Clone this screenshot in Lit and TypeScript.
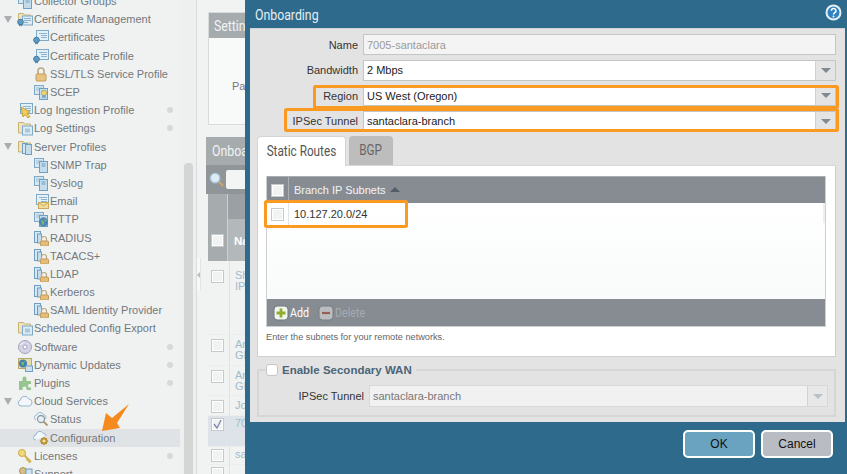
import { LitElement, html, svg, css, nothing } from 'lit';
import { customElement } from 'lit/decorators.js';

// sidebar icons, all drawn on a 16x16 box
const folder = svg`<path d="M1.5 2.5h5l1 1.5h6v9h-12z" fill="#efe4bb" stroke="#c8b377"/>`;
const sheet = svg`<rect x="5.5" y="5" width="10" height="9" fill="#dcebf4" stroke="#7ea9c7"/><path d="M7 7.500h7M7 9.500h7M7 11.500h4" stroke="#8db4cf"/>`;
const doc = svg`<rect x="3.500" y="1.500" width="12" height="10" fill="#e4f0f7" stroke="#7ea9c7"/><path d="M6 4.500h8M8 6.500h6M8 8.500h6" stroke="#8db4cf"/>`;
const badge = svg`<circle cx="3.500" cy="11" r="2.800" fill="#5f9cc4" stroke="#3f7ba3"/><path d="M2.500 13l-.5 2.500 1.500-1 1.500 1-.5-2.500" fill="#3f7ba3"/>`;
const servers = svg`<rect x="1.500" y="1.500" width="9" height="9" fill="#d6e7f2" stroke="#7ea9c7"/><path d="M3 4h6M3 6h3" stroke="#9cbfd6"/><rect x="6.500" y="4.500" width="8" height="11" fill="#c5dcec" stroke="#6f9fc1"/><path d="M8.500 7h4M8.500 9h4" stroke="#6f9fc1"/>`;
const padlock = svg`<path d="M8.500 11V9a2.500 2.500 0 0 1 5 0v2" fill="none" stroke="#b9a883" stroke-width="1.200"/><rect x="7.500" y="11" width="8" height="5" rx="1" fill="#e5bd79" stroke="#c49c59"/>`;

const icons: Record<string, unknown> = {
  folderDoc: svg`${folder}${sheet}`,
  folderCert: svg`${folder}${sheet}${badge}`,
  cert: svg`${doc}${badge}`,
  lock: svg`<path d="M5 8V5a3 3 0 0 1 6 0v3" fill="none" stroke="#b9a883" stroke-width="1.600"/><rect x="3" y="8" width="10" height="7" rx="1" fill="#e9c383" stroke="#c49c59"/>`,
  scep: svg`${servers}<circle cx="11" cy="9" r="2.500" fill="#f1d878" stroke="#caa94a"/><path d="M9.500 11l3 0 .5 3.500-2-1-2 1z" fill="#6fa4c8"/>`,
  ingest: svg`${doc}<path d="M4 5l9 5-3 1.500 3 3-2 1.500-3-3.500-2 2.500z" fill="#f3cd5c" stroke="#c79f35"/>`,
  folderPlain: svg`${folder}<rect x="5.500" y="6" width="10" height="9" fill="#dcebf4" stroke="#7ea9c7"/><path d="M8 8.500h5v4h-5z" fill="#a8c8dd"/>`,
  folderServer: svg`${folder}<rect x="5.500" y="4.500" width="5" height="10" fill="#d6e7f2" stroke="#6f9fc1"/><rect x="8.500" y="5.500" width="6" height="10" fill="#c5dcec" stroke="#6f9fc1"/>`,
  server: servers,
  mail: svg`${doc}<rect x="5.500" y="9.500" width="10" height="6" fill="#f3dd9b" stroke="#c9a95a"/><path d="M5.500 9.500l5 3.500 5-3.500" fill="none" stroke="#c9a95a"/>`,
  web: svg`${servers}<circle cx="10.500" cy="11" r="4.500" fill="#4a87b8"/><path d="M8 9l3 1v3l-2 1zM11 7.500l3 2-2 1z" fill="#7cb66a"/>`,
  serverLock: svg`<rect x="1.500" y="1.500" width="6" height="11" fill="#d6e7f2" stroke="#6f9fc1"/><rect x="4.500" y="4" width="4" height="9" fill="#c5dcec" stroke="#6f9fc1"/>${padlock}`,
  disc: svg`<circle cx="8" cy="8" r="6.500" fill="#d5d3e6" stroke="#a3a2bb"/><circle cx="8" cy="8" r="2" fill="#fff" stroke="#a3a2bb"/><path d="M3.500 6a5 5 0 0 1 3-2.500" stroke="#fff" fill="none"/>`,
  updates: svg`<rect x="1.500" y="1.500" width="13" height="10" fill="#e5dcae" stroke="#b9a868"/><circle cx="6" cy="6.500" r="4" fill="#3f7fb0"/><path d="M4 4.500l3 .5v3l-2 .5zM7 3.500l2 1-1 1z" fill="#79b56a"/><rect x="8.500" y="9" width="7" height="5.500" fill="#cfe1ee" stroke="#6f9fc1"/>`,
  plugin: svg`<path d="M2 6h3.500V3.500a2 2 0 0 1 4 0V6H14v3h-2a2 2 0 0 0 0 3.500h2V15H9.500v-1.500a2 2 0 0 0-4 0V15H2z" fill="#97c590"/>`,
  cloud: svg`<path d="M4 13a3 3 0 0 1-.6-5.900 4.200 4.200 0 0 1 8-1.400 3.700 3.700 0 0 1 .8 7.300z" fill="#f3f7fa" stroke="#94b6cd"/>`,
  status: svg`<path d="M3 9a2.500 2.500 0 0 1 .5-4.800 3.800 3.800 0 0 1 7-.7 3 3 0 0 1 2 4.500" fill="#f3f7fa" stroke="#94b6cd"/><circle cx="8" cy="8" r="3.500" fill="#e6f0f6" stroke="#8b9aa5" stroke-width="1.300"/><path d="M10.500 10.500l4 4" stroke="#aa9a78" stroke-width="2"/>`,
  config: svg`<path d="M3 10a2.500 2.500 0 0 1 0-5 3.800 3.800 0 0 1 7.200-1.500 3 3 0 0 1 3 2.500" fill="#f3f7fa" stroke="#94b6cd"/><circle cx="11" cy="11" r="3.200" fill="#e8bd5c" stroke="#b08c32"/><path d="M11 6.800v8.400M6.800 11h8.400M8 8l6 6M14 8l-6 6" stroke="#b08c32"/><circle cx="11" cy="11" r="1.300" fill="#f6e4ae"/>`,
  key: svg`<circle cx="5" cy="5" r="3.500" fill="#f1d878" stroke="#c9a94a"/><path d="M7.500 7.500l6.500 6.500M11 11l-1.500 1.500M13 13l-1.500 1.500" stroke="#d0b153" stroke-width="2"/>`,
  people: svg`<circle cx="6" cy="5" r="3.500" fill="#d7bd86" stroke="#ad9358"/><rect x="9" y="3" width="6" height="10" fill="#cfe1ee" stroke="#6f9fc1"/><path d="M1 15c0-7 10-7 10 0z" fill="#d7bd86"/>`,
};

interface TreeItem { label: string; icon: string; child?: boolean; open?: boolean; dot?: boolean; selected?: boolean }

const tree: TreeItem[] = [
  { label: 'Collector Groups', icon: 'server' },
  { label: 'Certificate Management', icon: 'folderCert', open: true },
  { label: 'Certificates', icon: 'cert', child: true },
  { label: 'Certificate Profile', icon: 'cert', child: true },
  { label: 'SSL/TLS Service Profile', icon: 'lock', child: true },
  { label: 'SCEP', icon: 'scep', child: true },
  { label: 'Log Ingestion Profile', icon: 'ingest', dot: true },
  { label: 'Log Settings', icon: 'folderPlain', dot: true },
  { label: 'Server Profiles', icon: 'folderServer', open: true },
  { label: 'SNMP Trap', icon: 'server', child: true },
  { label: 'Syslog', icon: 'server', child: true },
  { label: 'Email', icon: 'mail', child: true },
  { label: 'HTTP', icon: 'web', child: true },
  { label: 'RADIUS', icon: 'serverLock', child: true },
  { label: 'TACACS+', icon: 'serverLock', child: true },
  { label: 'LDAP', icon: 'serverLock', child: true },
  { label: 'Kerberos', icon: 'serverLock', child: true },
  { label: 'SAML Identity Provider', icon: 'serverLock', child: true },
  { label: 'Scheduled Config Export', icon: 'folderPlain' },
  { label: 'Software', icon: 'disc', dot: true },
  { label: 'Dynamic Updates', icon: 'updates', dot: true },
  { label: 'Plugins', icon: 'plugin', dot: true },
  { label: 'Cloud Services', icon: 'cloud', open: true },
  { label: 'Status', icon: 'status', child: true },
  { label: 'Configuration', icon: 'config', child: true, selected: true },
  { label: 'Licenses', icon: 'key', dot: true },
  { label: 'Support', icon: 'people' },
];

const backRows = [
  { text: ['Sh', 'IP'], cls: 'r74' },
  { text: ['Ar', 'GI'], cls: 'r31' },
  { text: ['Ar', 'GI'], cls: 'r30' },
  { text: ['Jo'], cls: 'r20' },
  { text: ['70'], cls: 'r31 sel', checked: true },
  { text: ['sa'], cls: 'r18' },
  { text: [''], cls: 'r18' },
];

@customElement('app-root')
export class AppRoot extends LitElement {
  static styles = css`
    :host {
      display: block;
      position: relative;
      width: 847px;
      height: 474px;
      overflow: hidden;
      font-family: 'Liberation Sans', Arial, sans-serif;
      background: #f0f1f1;
    }
    .page {
      display: grid;
      grid-template-columns: 180px 17px 48px;
      height: 474px;
    }

    /* the product's headings use a condensed face, none is installed */
    .cond {
      display: inline-block;
      font-family: Roboto, sans-serif;
      font-weight: 400;
      transform: scaleX(0.82);
      transform-origin: left center;
    }

    /* left tree */
    .tree {
      margin-top: -8px;
      background: #f0f2f2;
      overflow: hidden;
    }
    .node {
      display: flex;
      align-items: center;
      height: 18.2px;
      font-size: 11px;
      color: #72787c;
      white-space: nowrap;
    }
    .node.selected { background: #dfe3e5; }
    .twist { width: 17px; flex: none; display: flex; justify-content: center; padding-right: 1px; box-sizing: border-box; }
    .twist i {
      width: 0;
      height: 0;
      border-left: 4px solid transparent;
      border-right: 4px solid transparent;
      border-top: 7px solid #a9aeb1;
    }
    .indent { width: 16px; flex: none; }
    .node svg { width: 16px; height: 16px; flex: none; margin-right: 1px; }
    .dot {
      width: 6px;
      height: 6px;
      margin-left: auto;
      margin-right: 7px;
      border-radius: 50%;
      background: #d6d9d9;
    }
    .scroller {
      background: #eef0f0;
      border-right: 1px solid #d9dcdc;
      box-sizing: border-box;
      padding: 163px 3px 0 4px;
    }
    .thumb { height: 320px; background: #d4d6d6; border-radius: 4px; }

    /* content behind the dialog, cut off by it */
    .back {
      position: relative;
      padding: 12px 0 0 11px;
      background: #f1f2f2;
      overflow: hidden;
      white-space: nowrap;
    }
    .handle {
      position: absolute;
      left: 0;
      top: 258px;
      width: 3px;
      height: 33px;
      background: #f7f8f8;
      border-right: 1px solid #e3e5e5;
      display: flex;
      align-items: center;
    }
    .handle i {
      width: 0;
      height: 0;
      border-top: 3px solid transparent;
      border-bottom: 3px solid transparent;
      border-right: 3px solid #b9bdbf;
    }
    .settings { width: 200px; height: 113px; border: 1px solid #d9dbdb; box-sizing: border-box; background: #f8f9f9; }
    .settings h3, .grid-title {
      margin: 0;
      font-weight: 400;
      color: #f0f3f4;
      background: #a6abae;
    }
    .settings h3 { height: 25px; line-height: 25px; padding-left: 5px; font-size: 15px; }
    .settings p { margin: 42px 0 0 23px; font-size: 11px; color: #777; }
    .onboard { margin: 12px 0 0 -2px; width: 240px; }
    .grid-title { height: 28px; line-height: 28px; padding-left: 6px; font-size: 15px; }
    .search { display: flex; align-items: center; height: 29px; gap: 2px; padding-left: 3px; background: #8f9599; }
    .search svg { width: 15px; height: 15px; }
    .search div { width: 100px; height: 19px; background: #f3f4f4; border-radius: 2px; }
    .head { display: grid; grid-template-columns: 22px 1fr; height: 67px; }
    .head > div { border-right: 1px solid #cdd0d2; background: #a6abae; position: relative; display: flex; align-items: flex-end; }
    .head .name-col { background: linear-gradient(#9aa0a4 38%, #b3b8bb 38%); color: #fff; font-size: 11.5px; font-weight: 700; padding: 0 0 14px 6px; }
    .head .check-col { padding: 0 0 14px 3px; margin-left: 2px; }
    .row { display: grid; grid-template-columns: 22px 1fr; margin-left: 2px; border-bottom: 1px solid #eceeee; box-sizing: border-box; }
    .r74 { height: 74px; }
    .r31 { height: 31px; }
    .r30 { height: 30px; }
    .r20 { height: 20px; }
    .r18 { height: 18px; }
    .row.sel { background: #dde3e8; }
    .row > div:first-child { padding: 4px 0 0 3px; border-right: 1px solid #e0e2e2; }
    .row > div:last-child { padding: 4px 0 0 5px; font-size: 11px; line-height: 11px; color: #9dbccd; }
    .row.r74 > div { padding-top: 9px; }
    .row.sel > div, .row.r18 > div { padding-top: 2px; }
    .box {
      display: block;
      width: 11px;
      height: 11px;
      border: 1px solid #c6c9cb;
      background: #f1f2f2;
      box-shadow: inset 0 0 0 1px #fff;
    }
    .box svg { display: block; width: 11px; height: 11px; }

    /* dialog */
    .dialog {
      position: absolute;
      left: 245px;
      top: 0;
      width: 602px;
      height: 474px;
      display: flex;
      flex-direction: column;
      background: #2d6a8c;
    }
    .title {
      display: flex;
      align-items: center;
      justify-content: space-between;
      height: 28px;
      flex: none;
      padding: 2px 5px 0 10px;
      box-sizing: border-box;
      font-size: 15px;
      color: #e6eef3;
    }
    .title svg { width: 17px; height: 17px; margin-bottom: 6px; }
    .body {
      margin: 0 2px 0 5px;
      height: 394px;
      flex: none;
      box-sizing: border-box;
      padding: 5px 9px 0 7px;
      background: #e3e3e3;
      border-top: 1px solid #cfd3d5;
    }
    .form { display: grid; grid-auto-rows: 21px; row-gap: 4.500px; }
    .field { display: grid; grid-template-columns: 101px 1fr; column-gap: 5px; align-items: center; font-size: 11px; }
    .field label { text-align: right; color: #333; }
    .control {
      display: flex;
      align-items: center;
      height: 21px;
      box-sizing: border-box;
      border: 1px solid #c4c6c6;
      background: #fff;
      color: #222;
      padding-left: 3px;
      position: relative;
    }
    .control.readonly { background: #f4f4f4; color: #9a9a9a; }
    .caret {
      margin-left: auto;
      width: 20px;
      height: 19px;
      box-sizing: border-box;
      border-left: 1px solid #d2d2d2;
      background: #e4e4e4;
      display: flex;
      align-items: center;
      justify-content: center;
    }
    .caret i {
      width: 0;
      height: 0;
      border-left: 5px solid transparent;
      border-right: 5px solid transparent;
      border-top: 5px solid #7f8a92;
    }

    .tabs { display: flex; gap: 3px; height: 29px; margin-top: 4.500px; position: relative; z-index: 1; }
    .tab {
      box-sizing: border-box;
      padding-top: 6px;
      text-align: center;
      font-size: 14px;
      white-space: nowrap;
      border-radius: 4px 4px 0 0;
    }
    .tab .cond { transform-origin: center; transform: scaleX(0.84); }
    .tab.on { width: 89px; height: 30px; background: #fff; color: #555; border: 1px solid #d4d4d4; border-bottom: none; }
    .tab.off { width: 44px; background: #bdbdbd; color: #666; }
    .panel {
      height: 192px;
      box-sizing: border-box;
      padding: 10px 9px 0 8px;
      background: #fff;
      border: 1px solid #cfcfcf;
      border-top-color: #d8d8d8;
    }
    .table { height: 151px; display: flex; flex-direction: column; border: 1px solid #cdd0d2; border-top: none; box-sizing: border-box; }
    .thead { display: grid; grid-template-columns: 22px 1fr; height: 27px; flex: none; background: #868c92; border-top: 1px solid #a9adb1; box-sizing: border-box; }
    .thead > div:first-child, .trow > div:first-child { border-right: 1px solid #aab0b4; display: flex; align-items: center; justify-content: center; }
    .trow > div:first-child { border-right-color: #e1e3e5; }
    .thead > div:last-child { display: flex; align-items: center; gap: 4px; padding: 0 0 1px 5px; color: #f4f5f6; font-size: 11px; }
    .thead .sort { width: 0; height: 0; border-left: 5px solid transparent; border-right: 5px solid transparent; border-bottom: 5px solid #555c63; }
    .tbody { flex: 1; background: linear-gradient(#fff, #f8fbfa); position: relative; }
    .track { position: absolute; right: 0; top: 0; width: 2px; height: 20px; background: #eceef0; }
    .trow { display: grid; grid-template-columns: 22px 1fr; height: 22px; }
    .trow > div:last-child { display: flex; align-items: center; padding-left: 5px; font-size: 11px; color: #333; }
    .tfoot { display: flex; align-items: center; height: 27px; flex: none; padding-left: 6px; background: #868c92; font-size: 13px; color: #fff; }
    .tfoot svg { width: 16px; height: 16px; margin-right: 1px; flex: none; }
    .tfoot .add { width: 28px; }
    .tfoot .muted { color: #a6abb0; }
    .hint { margin: 5px 0 0; font-size: 9.200px; color: #666; }

    fieldset {
      margin: 7px 0 0;
      padding: 0;
      height: 53px;
      box-sizing: border-box;
      border: 2px solid #d6d6d6;
    }
    legend {
      display: flex;
      align-items: center;
      gap: 4px;
      margin-left: 7px;
      padding: 0 4px 0 0;
      font-size: 11.500px;
      font-weight: 700;
      color: #4c6577;
    }
    .round { width: 10px; height: 10px; border: 1px solid #c4c6c6; border-radius: 3px; background: #fff; }
    fieldset .field { margin: 9px 6px 0 0; grid-template-columns: 105px 1fr; color: #777; }
    fieldset label { color: #777; }
    fieldset .control { background: #f1f1f1; color: #777; height: 22px; border-color: #d8d8d8; }
    fieldset .caret { background: #e8e8e8; height: 20px; }
    fieldset .caret i { border-top-color: #b9bfc4; }

    .actions { display: flex; justify-content: flex-end; gap: 6px; padding: 8px 14px 0 0; }
    button {
      width: 72px;
      height: 28px;
      box-sizing: border-box;
      border: 2px solid #fff;
      border-radius: 5px;
      font-family: 'Liberation Sans', Arial, sans-serif;
      font-size: 12px;
      color: #111;
      padding: 0;
    }
    .ok { background: #6aa3c0; }
    .cancel { background: #babcc4; }

    /* annotations drawn over the screenshot */
    .marks { position: absolute; left: 0; top: 0; width: 847px; height: 474px; pointer-events: none; }
  `;

  private renderNode(n: TreeItem) {
    return html`
      <div class="node ${n.selected ? 'selected' : ''}">
        <span class="twist">${n.open ? html`<i></i>` : nothing}</span>
        ${n.child ? html`<span class="indent"></span>` : nothing}
        <svg viewBox="0 0 16 16">${icons[n.icon]}</svg>
        <span>${n.label}</span>
        ${n.dot ? html`<span class="dot"></span>` : nothing}
      </div>
    `;
  }

  private renderBack() {
    return html`
      <div class="back">
        <div class="handle"><i></i></div>
        <div class="settings">
          <h3><span class="cond">Settin</span></h3>
          <p>Pa</p>
        </div>
        <div class="onboard">
          <div class="grid-title"><span class="cond">Onboa</span></div>
          <div class="search">
            <svg viewBox="0 0 16 16">
              <circle cx="6.500" cy="6.500" r="5" fill="#dcebf4" stroke="#a9c6da" stroke-width="1.500"/>
              <path d="M10.500 10.500l4.500 4.500" stroke="#c9a66b" stroke-width="2.200"/>
            </svg>
            <div></div>
          </div>
          <div class="head">
            <div class="check-col"><span class="box"></span></div>
            <div class="name-col">Na</div>
          </div>
          ${backRows.map(r => html`
            <div class="row ${r.cls}">
              <div>
                <span class="box">
                  ${r.checked ? html`<svg viewBox="0 0 11 11"><path d="M2 5l3 4 4-8" fill="none" stroke="#7f86b5" stroke-width="1.300"/></svg>` : nothing}
                </span>
              </div>
              <div>${r.text.map(t => html`${t}<br>`)}</div>
            </div>
          `)}
        </div>
      </div>
    `;
  }

  private renderField(label: string, value: string, select = true, readonly = false) {
    return html`
      <div class="field">
        <label>${label}</label>
        <div class="control ${readonly ? 'readonly' : ''}">
          <span>${value}</span>
          ${select ? html`<span class="caret"><i></i></span>` : nothing}
        </div>
      </div>
    `;
  }

  render() {
    return html`
      <div class="page">
        <div class="tree">${tree.map(n => this.renderNode(n))}</div>
        <div class="scroller"><div class="thumb"></div></div>
        ${this.renderBack()}
      </div>

      <div class="dialog">
        <div class="title">
          <span class="cond">Onboarding</span>
          <svg viewBox="0 0 17 17">
            <circle cx="8.500" cy="8.500" r="7" fill="#2f82bd" stroke="#e4eff6" stroke-width="2"/>
            <path d="M6.300 6.800a2.300 2.200 0 1 1 3.500 1.800c-.9.600-1.300 1-1.300 2" fill="none" stroke="#fff" stroke-width="1.600"/>
            <circle cx="8.500" cy="12.600" r="1" fill="#fff"/>
          </svg>
        </div>

        <div class="body">
          <div class="form">
            ${this.renderField('Name', '7005-santaclara', false, true)}
            ${this.renderField('Bandwidth', '2 Mbps')}
            ${this.renderField('Region', 'US West (Oregon)')}
            ${this.renderField('IPSec Tunnel', 'santaclara-branch')}
          </div>

          <div class="tabs">
            <div class="tab on"><span class="cond">Static Routes</span></div>
            <div class="tab off"><span class="cond">BGP</span></div>
          </div>
          <div class="panel">
            <div class="table">
              <div class="thead">
                <div><span class="box"></span></div>
                <div>Branch IP Subnets <span class="sort"></span></div>
              </div>
              <div class="tbody">
                <span class="track"></span>
                <div class="trow">
                  <div><span class="box"></span></div>
                  <div>10.127.20.0/24</div>
                </div>
              </div>
              <div class="tfoot">
                <svg viewBox="0 0 16 16">
                  <rect x="1" y="1" width="14" height="14" rx="3.500" fill="#f2f4f0" stroke="#6d7880"/>
                  <path d="M8 3.500v9M3.500 8h9" stroke="#8fae2b" stroke-width="2.800"/>
                </svg>
                <span class="cond add">Add</span>
                <svg viewBox="0 0 16 16">
                  <rect x="1" y="1" width="14" height="14" rx="3.500" fill="#b9bdc0" stroke="#767d83"/>
                  <path d="M4 8h8" stroke="#96604f" stroke-width="2.200"/>
                </svg>
                <span class="cond muted">Delete</span>
              </div>
            </div>
            <p class="hint">Enter the subnets for your remote networks.</p>
          </div>

          <fieldset>
            <legend><span class="round"></span>Enable Secondary WAN</legend>
            <div class="field">
              <label>IPSec Tunnel</label>
              <div class="control">
                <span>santaclara-branch</span>
                <span class="caret"><i></i></span>
              </div>
            </div>
          </fieldset>
        </div>

        <div class="actions">
          <button class="ok">OK</button>
          <button class="cancel">Cancel</button>
        </div>
      </div>

      <svg class="marks" viewBox="0 0 847 474">
        <g fill="none" stroke="#fb9a22" stroke-width="3">
          <rect x="314.500" y="86.500" width="523" height="21" rx="1"/>
          <rect x="285.500" y="109.500" width="552" height="21" rx="1"/>
          <rect x="265.500" y="201.500" width="141" height="25" rx="1"/>
        </g>
        <path d="M102 431l4-18 6 5 17-14-12 19 3 5z" fill="#f58a1f"/>
      </svg>
    `;
  }
}
